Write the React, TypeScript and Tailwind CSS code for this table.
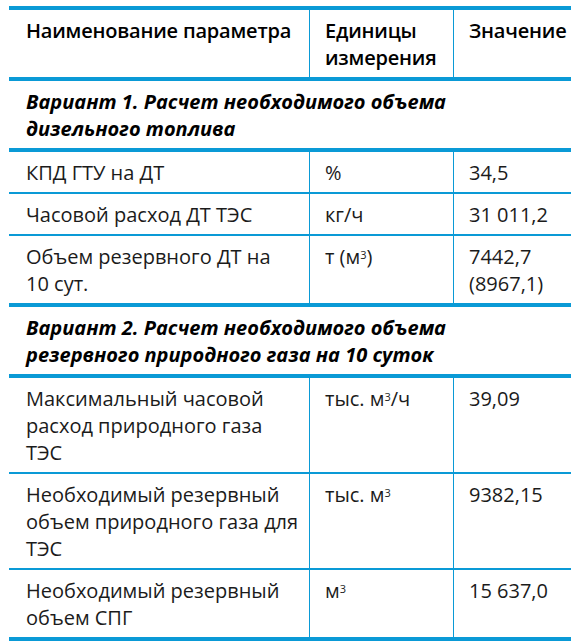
type Row = {
  name: string[]
  unit: React.ReactNode
  value: string[]
}

const M3 = () => (
  <>
    м<sup className="text-[11px]">3</sup>
  </>
)

const variant1: Row[] = [
  { name: ['КПД ГТУ на ДТ'], unit: '%', value: ['34,5'] },
  { name: ['Часовой расход ДТ ТЭС'], unit: 'кг/ч', value: ['31 011,2'] },
  {
    name: ['Объем резервного ДТ на', '10 сут.'],
    unit: (
      <>
        т (<M3 />)
      </>
    ),
    value: ['7442,7', '(8967,1)']
  }
]

const variant2: Row[] = [
  {
    name: ['Максимальный часовой', 'расход природного газа', 'ТЭС'],
    unit: (
      <>
        тыс. <M3 />/ч
      </>
    ),
    value: ['39,09']
  },
  {
    name: ['Необходимый резервный', 'объем природного газа для', 'ТЭС'],
    unit: (
      <>
        тыс. <M3 />
      </>
    ),
    value: ['9382,15']
  },
  { name: ['Необходимый резервный', 'объем СПГ'], unit: <M3 />, value: ['15 637,0'] }
]

const grid = 'grid grid-cols-[300px_144px_118px]'
const cell = 'pt-[7px] pb-[6px]'

function Lines({ lines }: { lines: string[] }) {
  return (
    <>
      {lines.map((l) => (
        <span key={l} className="block whitespace-nowrap">
          {l}
        </span>
      ))}
    </>
  )
}

function DataRows({ rows }: { rows: Row[] }) {
  return (
    <>
      {rows.map((r, i) => (
        <div
          key={i}
          className={`${grid} ${i === rows.length - 1 ? 'border-b-4' : 'border-b-2'} border-[#0a9ad6]`}
        >
          <div className={`${cell} pl-[17px]`}>
            <Lines lines={r.name} />
          </div>
          <div className={`${cell} pl-[15px] border-l border-[#0a9ad6] whitespace-nowrap`}>
            {r.unit}
          </div>
          <div className={`${cell} pl-[15px] border-l border-[#0a9ad6]`}>
            <Lines lines={r.value} />
          </div>
        </div>
      ))}
    </>
  )
}

function Section({ lines }: { lines: string[] }) {
  return (
    <div className={`${cell} pl-[17px] border-b-4 border-[#0a9ad6] font-bold italic text-black`}>
      <Lines lines={lines} />
    </div>
  )
}

export default function App() {
  return (
    <div className="min-h-[644px] bg-white pt-[6px] pl-[9px] overflow-hidden">
      <div
        className="w-[562px] border-t-4 border-[#0a9ad6] text-[20px] leading-[27px] text-[#1b1b1b]"
        style={{ fontFamily: '"Open Sans", "Noto Sans", sans-serif' }}
      >
        {/* Header */}
        <div className={`${grid} border-b-4 border-[#0a9ad6] font-semibold tracking-[-0.2px] text-black`}>
          <div className={`${cell} pl-[17px] whitespace-nowrap`}>Наименование параметра</div>
          <div className={`${cell} pl-[15px] border-l border-[#0a9ad6]`}>
            <Lines lines={['Единицы', 'измерения']} />
          </div>
          <div className={`${cell} pl-[15px] border-l border-[#0a9ad6]`}>Значение</div>
        </div>

        <Section lines={['Вариант 1. Расчет необходимого объема', 'дизельного топлива']} />
        <DataRows rows={variant1} />

        <Section
          lines={['Вариант 2. Расчет необходимого объема', 'резервного природного газа на 10 суток']}
        />
        <DataRows rows={variant2} />
      </div>
    </div>
  )
}
